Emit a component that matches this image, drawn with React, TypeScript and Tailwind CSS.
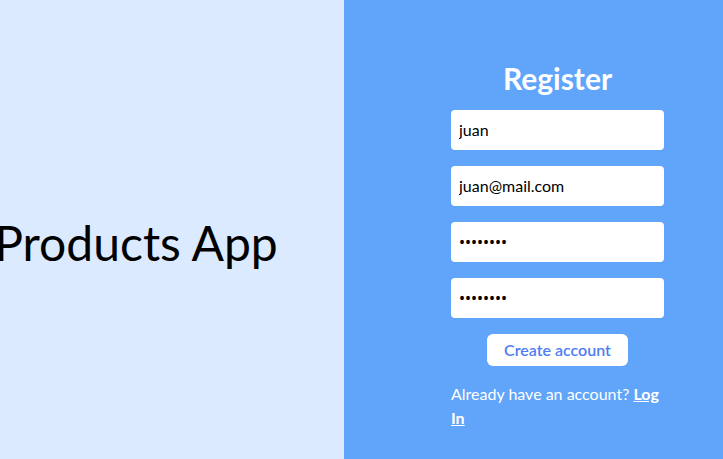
const App = (): React.ReactElement => {
  return (
    <main
      className="flex h-screen w-full overflow-hidden"
      style={{ fontFamily: 'Lato, "Noto Sans", sans-serif' }}
    >
      {/* Left side: app title */}
      <section className="flex h-full w-[344px] shrink-0 items-center justify-center bg-[#dbeafe] pt-[27px] pr-[72px]">
        <h1 className="whitespace-nowrap text-5xl leading-none text-black">Products App</h1>
      </section>

      {/* Right side: register form */}
      <section className="flex h-full flex-1 items-center justify-center bg-[#60a5fa] pt-[30px] pl-[48px]">
        <form className="flex w-[213px] flex-col items-center" onSubmit={(e) => e.preventDefault()}>
          <h2 className="text-3xl font-bold text-white">Register</h2>
          <div className="mt-[14px] flex w-full flex-col gap-4">
            <input
              type="text"
              defaultValue="juan"
              className="h-10 w-full rounded bg-white px-2 text-base text-black outline-none"
            />
            <input
              type="email"
              defaultValue="juan@mail.com"
              className="h-10 w-full rounded bg-white px-2 text-base text-black outline-none"
            />
            <input
              type="password"
              defaultValue="12345678"
              className="h-10 w-full rounded bg-white px-2 font-['Noto_Sans'] text-base text-black outline-none"
            />
            <input
              type="password"
              defaultValue="12345678"
              className="h-10 w-full rounded bg-white px-2 font-['Noto_Sans'] text-base text-black outline-none"
            />
          </div>
          <button
            type="submit"
            className="mt-4 h-8 w-[141px] rounded-md bg-white text-base font-semibold text-[#4f7df3]"
          >
            Create account
          </button>
          <p className="mt-4 w-full text-base leading-6 text-white">
            Already have an account?{' '}
            <a href="#" className="font-bold underline">
              Log In
            </a>
          </p>
        </form>
      </section>
    </main>
  );
};

export default App;
